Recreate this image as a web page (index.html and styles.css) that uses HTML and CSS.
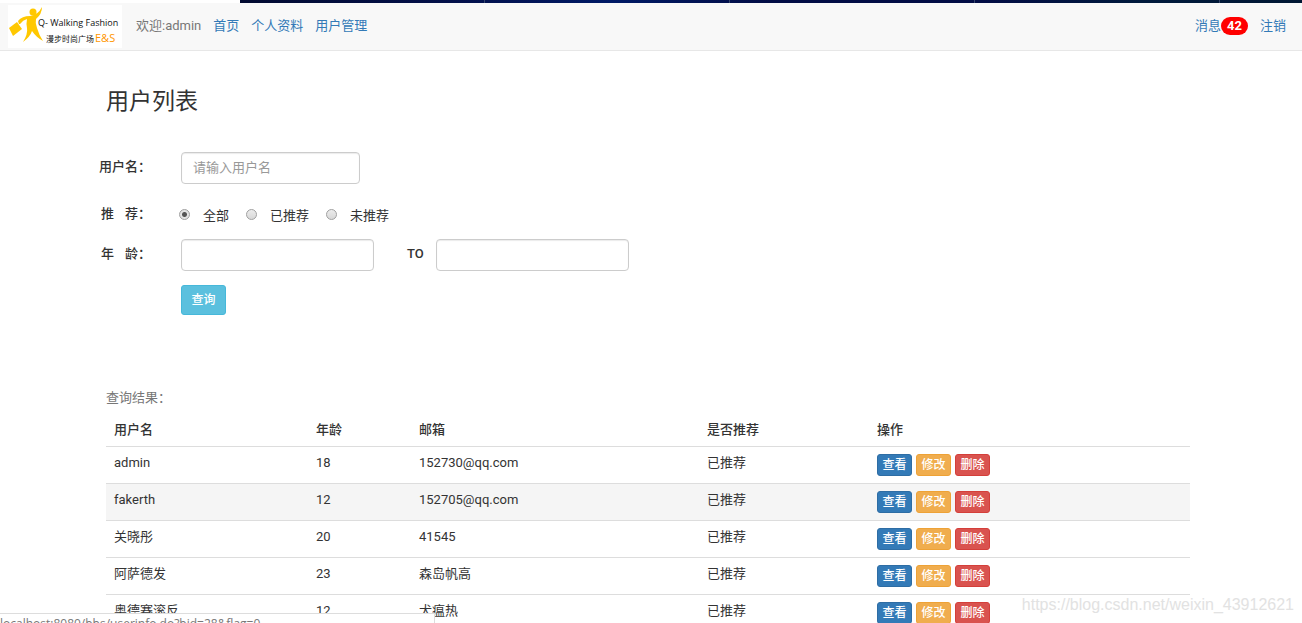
FILE: index.html
```html
<!DOCTYPE html>
<html lang="zh-CN">
<head>
<meta charset="utf-8">
<title>用户列表</title>
<link rel="stylesheet" href="styles.css">
</head>
<body>
<div class="tabstrip"><span class="tab-blank"></span><span class="tab-dark"></span></div>
<nav class="navbar">
  <a class="brand" href="#" aria-label="Q- Walking Fashion">
    <svg class="logo" viewBox="0 0 114 43" width="114" height="43">
      <rect width="114" height="43" fill="#fff"/>
      <g fill="#ffc800">
        <path d="M1 23 L9 17 L14 24 L5 31 Z"/>
        <circle cx="25" cy="7" r="3.5"/>
        <path d="M10 16 Q14 11 22 11 Q30 10 34 2 Q34 9 28 14 Q27 18 29 23 Q31 30 35 36 Q28 32 24 26 Q22 32 15 37 Q20 29 19 23 Q18 19 19 14 Q15 15 12 19 L11 19 Z"/>
      </g>
      <text class="logo-title" x="30" y="21">Q- Walking Fashion</text>
      <text class="logo-sub" x="38" y="37">漫步时尚广场</text>
      <text class="logo-mark" x="87" y="37">E&amp;S</text>
    </svg>
  </a>
  <span class="welcome">欢迎:admin</span>
  <a class="nav-link" href="#">首页</a>
  <a class="nav-link" href="#">个人资料</a>
  <a class="nav-link" href="#">用户管理</a>
  <div class="nav-right">
    <a class="nav-link message" href="#">消息<span class="badge">42</span></a>
    <a class="nav-link" href="#">注销</a>
  </div>
</nav>
<main class="container">
  <h1 class="title">用户列表</h1>
  <form class="search">
    <div class="row row-name">
      <label class="field-label" for="name">用户名：</label>
      <input class="control control-name" id="name" type="text" placeholder="请输入用户名">
    </div>
    <div class="row row-radio" role="radiogroup" aria-labelledby="rec">
      <span class="field-label spaced" id="rec"><span>推</span><span>荐：</span></span>
      <label class="choice"><input class="radio" type="radio" name="rec" checked><span>全部</span></label>
      <label class="choice"><input class="radio" type="radio" name="rec"><span>已推荐</span></label>
      <label class="choice"><input class="radio" type="radio" name="rec"><span>未推荐</span></label>
    </div>
    <div class="row row-age">
      <label class="field-label spaced" for="age-from"><span>年</span><span>龄：</span></label>
      <input class="control control-age" id="age-from" type="text">
      <label class="to" for="age-to">TO</label>
      <input class="control control-age" id="age-to" type="text">
    </div>
    <button class="submit" type="button">查询</button>
  </form>
  <table class="results">
    <caption>查询结果：</caption>
    <colgroup><col class="c-name"><col class="c-age"><col class="c-mail"><col class="c-rec"><col></colgroup>
    <thead><tr><th>用户名</th><th>年龄</th><th>邮箱</th><th>是否推荐</th><th>操作</th></tr></thead>
    <tbody>
      <tr><td>admin</td><td>18</td><td>152730@qq.com</td><td>已推荐</td><td><div class="actions"><button class="btn view">查看</button><button class="btn edit">修改</button><button class="btn del">删除</button></div></td></tr>
      <tr class="hover"><td>fakerth</td><td>12</td><td>152705@qq.com</td><td>已推荐</td><td><div class="actions"><button class="btn view">查看</button><button class="btn edit">修改</button><button class="btn del">删除</button></div></td></tr>
      <tr><td>关晓彤</td><td>20</td><td>41545</td><td>已推荐</td><td><div class="actions"><button class="btn view">查看</button><button class="btn edit">修改</button><button class="btn del">删除</button></div></td></tr>
      <tr><td>阿萨德发</td><td>23</td><td>森岛帆高</td><td>已推荐</td><td><div class="actions"><button class="btn view">查看</button><button class="btn edit">修改</button><button class="btn del">删除</button></div></td></tr>
      <tr><td>奥德赛滚反</td><td>12</td><td>犬瘟热</td><td>已推荐</td><td><div class="actions"><button class="btn view">查看</button><button class="btn edit">修改</button><button class="btn del">删除</button></div></td></tr>
    </tbody>
  </table>
</main>
<div class="status">localhost:8080/bbs/userinfo.do?bid=28&amp;flag=0</div>
<div class="watermark">https://blog.csdn.net/weixin_43912621</div>
</body>
</html>
```
FILE: styles.css
```css
* { box-sizing: border-box; }
html { height: 100%; overflow: hidden; }
body {
  margin: 0;
  height: 100%;
  overflow: hidden;
  background: #fff;
  color: #333;
  font: 13px/19px Roboto, "Noto Sans CJK SC", sans-serif;
}
a { color: #337ab7; text-decoration: none; }

.tabstrip { display: flex; height: 3px; }
.tab-blank { flex: 0 0 240px; }
.tab-dark {
  flex: 1;
  background:
    repeating-linear-gradient(90deg, transparent 0 244px, #34446a 244px 245px),
    linear-gradient(90deg, #020a30, #03104a 20%, #001a66 35%, #020d45 50%, #020d45 70%, #001a3c 85%, #001733);
}

.navbar {
  display: flex;
  align-items: center;
  gap: 12px;
  height: 48px;
  padding: 0 16px 0 8px;
  background: #f8f8f8;
  border-bottom: 1px solid #e7e7e7;
}
.brand, .logo { display: block; }
.brand { margin-right: 2px; }
.logo-title { font: 9px "Open Sans", sans-serif; fill: #111; }
.logo-sub { font: 8px "Noto Sans CJK SC", sans-serif; fill: #111; }
.logo-mark { font: 11px "Open Sans", sans-serif; fill: #ff9600; }
.welcome, .nav-link { padding-bottom: 2px; }
.welcome { color: #777; }
.nav-right { display: flex; align-items: center; gap: 12px; margin-left: auto; }
.message { display: flex; align-items: center; }
.badge {
  padding: 0 6px;
  border-radius: 10px;
  background: #f00;
  color: #fff;
  font-weight: 700;
  line-height: 18px;
}

.container { padding: 38px 112px 0 106px; }
.title { margin: 0; font-size: 23px; font-weight: 400; line-height: 26px; }

.search { margin: 37px 0 0 -7px; }
.row { display: flex; }
.field-label { flex: none; width: 82px; font-weight: 500; line-height: 30px; }
.spaced { display: flex; gap: 11px; padding-left: 2px; }
.control {
  height: 32px;
  padding: 0 11px 2px;
  border: 1px solid #ccc;
  border-radius: 4px;
  background: #fff;
  box-shadow: inset 0 1px 1px rgba(0, 0, 0, .08);
  color: #555;
  font: inherit;
}
.control::placeholder { color: #999; }
.control-name { width: 179px; }
.control-age { width: 193px; }
.row-radio { margin-top: 15px; }
.choice { display: flex; align-items: center; gap: 13px; height: 30px; margin-right: 17px; }
.choice span { padding-top: 2px; }
.row-radio .choice:nth-of-type(1) { margin-left: -2px; }
.radio {
  appearance: none;
  width: 11px;
  height: 11px;
  margin: 0;
  border: 1px solid #a0a0a0;
  border-radius: 50%;
  background: linear-gradient(#ececec, #d8d8d8);
}
.radio:checked { background: radial-gradient(circle, #555 0 2px, #e4e4e4 3px); }
.row-age { margin-top: 10px; }
.to { width: 62px; padding-left: 33px; font-weight: 500; line-height: 30px; }
.submit {
  display: block;
  margin: 14px 0 0 82px;
  width: 45px;
  height: 30px;
  padding: 0;
  border: 1px solid #46b8da;
  border-radius: 3px;
  background: #5bc0de;
  color: #fff;
  font: 500 12px/18px Roboto, "Noto Sans CJK SC", sans-serif;
}

.results { width: 100%; margin-top: 67px; border-collapse: collapse; table-layout: fixed; }
.results caption { padding: 7px 0; color: #777; text-align: left; line-height: 17px; }
.results th, .results td { padding: 7px 8px; text-align: left; vertical-align: top; line-height: 18px; }
.results th { padding-top: 8px; border-bottom: 1px solid #ddd; font-weight: 500; }
.results td { border-bottom: 1px solid #ddd; }
.hover { background: #f5f5f5; }
.c-name { width: 202px; }
.c-age { width: 103px; }
.c-mail { width: 288px; }
.c-rec { width: 170px; }
.actions { display: flex; gap: 4px; }
.btn {
  width: 35px;
  height: 22px;
  padding: 0;
  border: 1px solid;
  border-radius: 3px;
  color: #fff;
  font: 500 12px/18px Roboto, "Noto Sans CJK SC", sans-serif;
}
.view { background: #337ab7; border-color: #2e6da4; }
.edit { background: #f0ad4e; border-color: #eea236; }
.del { background: #d9534f; border-color: #d43f3a; }

.status {
  position: absolute;
  left: 0;
  bottom: 0;
  width: 435px;
  height: 10px;
  overflow: hidden;
  border: solid #ddd;
  border-width: 1px 1px 0 0;
  background: #fff;
  color: #777;
  font: 12px/20px "Open Sans", sans-serif;
}
.watermark {
  position: absolute;
  right: 8px;
  bottom: 8px;
  color: #e2e2e2;
  font: 16px/20px "Liberation Sans", sans-serif;
}
```
